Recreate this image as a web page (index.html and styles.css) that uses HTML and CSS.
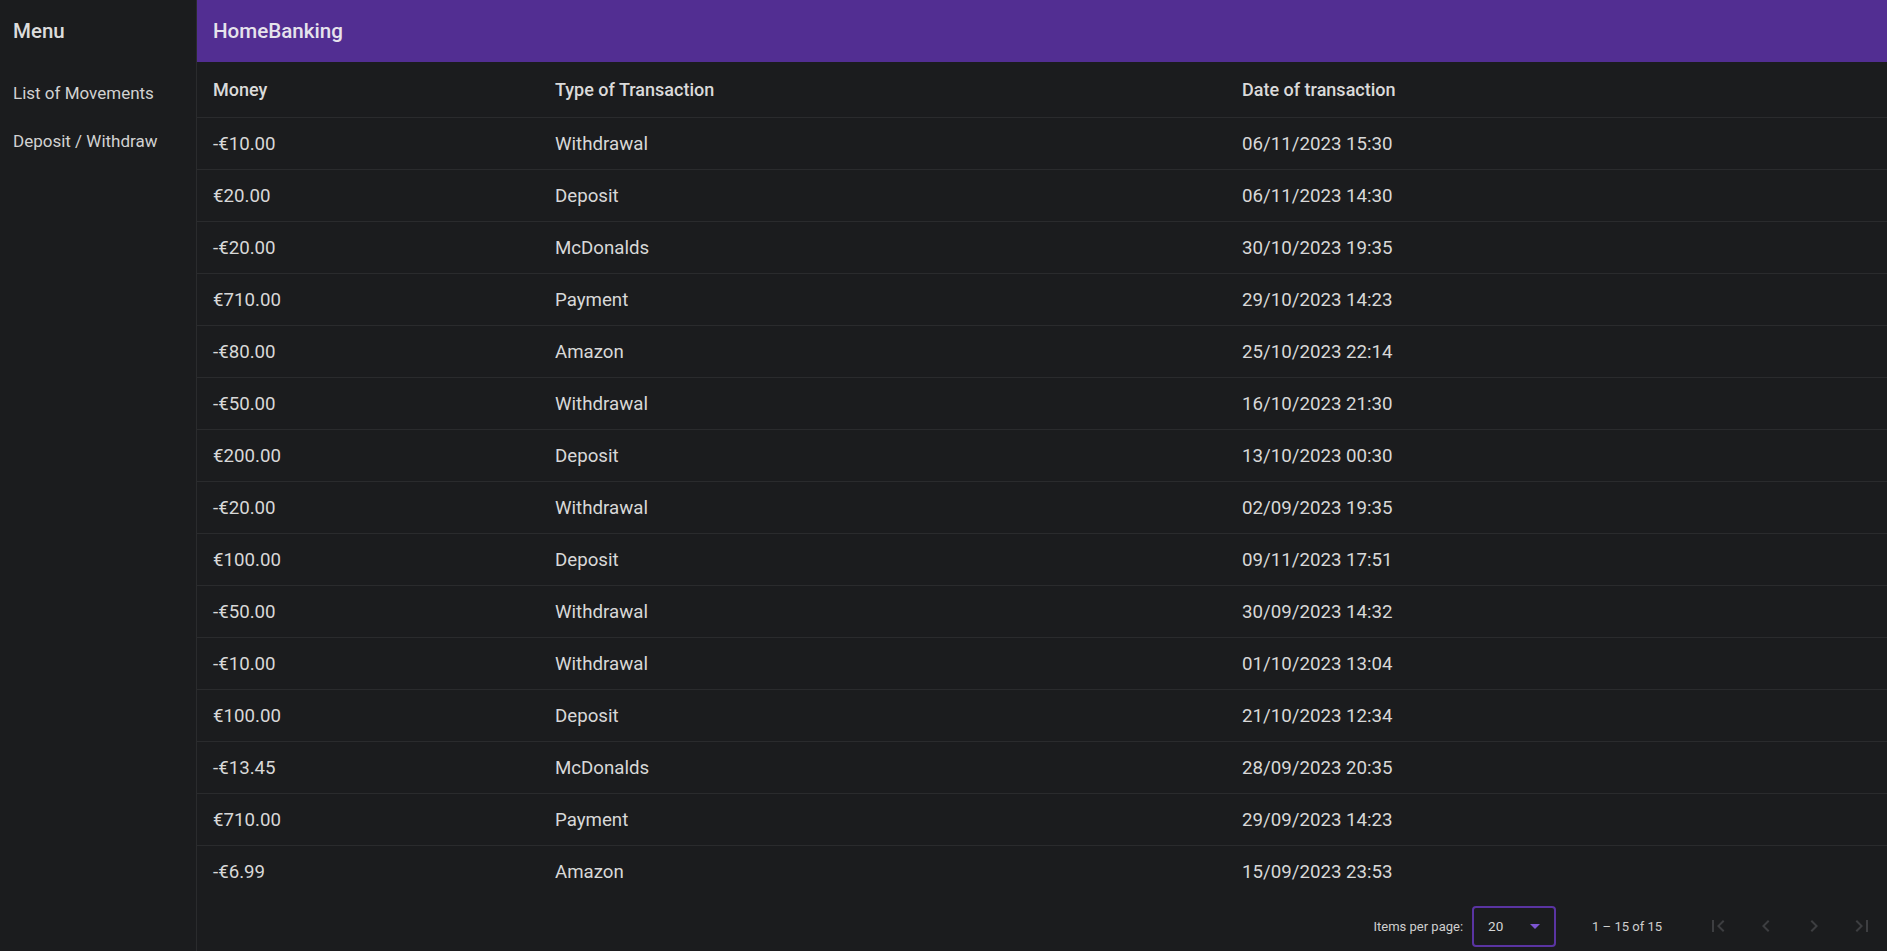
FILE: index.html
```html
<!DOCTYPE html>
<html lang="en">
<head>
<meta charset="utf-8">
<title>HomeBanking</title>
<link rel="stylesheet" href="styles.css">
</head>
<body>
<div class="app">
  <aside class="sidenav">
    <div class="side-title">Menu</div>
    <nav class="nav-list">
      <a class="nav-item" href="#">List of Movements</a>
      <a class="nav-item" href="#">Deposit / Withdraw</a>
    </nav>
  </aside>
  <main class="content">
    <header class="toolbar">HomeBanking</header>
    <table class="mov-table">
      <thead>
        <tr><th class="c-money">Money</th><th class="c-type">Type of Transaction</th><th>Date of transaction</th></tr>
      </thead>
      <tbody>
        <tr><td>-€10.00</td><td>Withdrawal</td><td>06/11/2023 15:30</td></tr>
        <tr><td>€20.00</td><td>Deposit</td><td>06/11/2023 14:30</td></tr>
        <tr><td>-€20.00</td><td>McDonalds</td><td>30/10/2023 19:35</td></tr>
        <tr><td>€710.00</td><td>Payment</td><td>29/10/2023 14:23</td></tr>
        <tr><td>-€80.00</td><td>Amazon</td><td>25/10/2023 22:14</td></tr>
        <tr><td>-€50.00</td><td>Withdrawal</td><td>16/10/2023 21:30</td></tr>
        <tr><td>€200.00</td><td>Deposit</td><td>13/10/2023 00:30</td></tr>
        <tr><td>-€20.00</td><td>Withdrawal</td><td>02/09/2023 19:35</td></tr>
        <tr><td>€100.00</td><td>Deposit</td><td>09/11/2023 17:51</td></tr>
        <tr><td>-€50.00</td><td>Withdrawal</td><td>30/09/2023 14:32</td></tr>
        <tr><td>-€10.00</td><td>Withdrawal</td><td>01/10/2023 13:04</td></tr>
        <tr><td>€100.00</td><td>Deposit</td><td>21/10/2023 12:34</td></tr>
        <tr><td>-€13.45</td><td>McDonalds</td><td>28/09/2023 20:35</td></tr>
        <tr><td>€710.00</td><td>Payment</td><td>29/09/2023 14:23</td></tr>
        <tr class="last"><td>-€6.99</td><td>Amazon</td><td>15/09/2023 23:53</td></tr>
      </tbody>
    </table>
    <div class="paginator">
      <span class="pg-label">Items per page:</span>
      <div class="pg-select"><span>20</span><span class="pg-arrow"></span></div>
      <span class="pg-range">1 – 15 of 15</span>
      <button class="pg-btn" aria-label="First page"><svg viewBox="0 0 24 24"><path d="M18.41 16.59L13.82 12l4.59-4.59L17 6l-6 6 6 6zM6 6h2v12H6z"/></svg></button>
      <button class="pg-btn" aria-label="Previous page"><svg viewBox="0 0 24 24"><path d="M15.41 7.41L14 6l-6 6 6 6 1.41-1.41L10.83 12z"/></svg></button>
      <button class="pg-btn" aria-label="Next page"><svg viewBox="0 0 24 24"><path d="M10 6L8.59 7.41 13.17 12l-4.58 4.59L10 18l6-6z"/></svg></button>
      <button class="pg-btn" aria-label="Last page"><svg viewBox="0 0 24 24"><path d="M5.59 7.41L10.18 12l-4.59 4.59L7 18l6-6-6-6zM16 6h2v12h-2z"/></svg></button>
    </div>
  </main>
</div>
</body>
</html>
```

FILE: styles.css
```css
html, body {
  margin: 0;
  padding: 0;
  height: 100%;
  overflow: hidden;
  background: #1b1c1e;
  font-family: Roboto, "Liberation Sans", sans-serif;
  color: #d9d9d9;
}

.app {
  display: flex;
  min-height: 100%;
}

.sidenav {
  width: 196px;
  flex: 0 0 196px;
  border-right: 1px solid #2a2b2d;
  background: #1b1c1e;
}

.side-title {
  height: 62px;
  display: flex;
  align-items: center;
  padding-left: 13px;
  font-size: 20.5px;
  font-weight: 500;
  color: #dcdcdc;
}

.nav-list {
  display: flex;
  flex-direction: column;
  padding-top: 7px;
}

.nav-item {
  height: 48px;
  display: flex;
  align-items: center;
  padding-left: 13px;
  font-size: 17px;
  color: #d2d2d2;
  text-decoration: none;
}

.content {
  flex: 1;
  display: flex;
  flex-direction: column;
  min-width: 0;
}

.toolbar {
  height: 62px;
  display: flex;
  align-items: center;
  padding-left: 16px;
  background: #522e92;
  font-size: 20.6px;
  font-weight: 500;
  color: #e6e3ec;
}

.mov-table {
  width: 100%;
  border-collapse: collapse;
  table-layout: fixed;
}

.mov-table th,
.mov-table td {
  text-align: left;
  padding: 0 0 0 16px;
  border-bottom: 1px solid #2a2b2d;
  color: #d8d8d8;
}

.mov-table th {
  height: 55px;
  font-size: 18px;
  font-weight: 500;
  color: #dadada;
}

.mov-table td {
  height: 51px;
  font-size: 18.7px;
  font-weight: 400;
}

.mov-table tr.last td {
  border-bottom: none;
  height: 52px;
}

.mov-table .c-money { width: 326px; }
.mov-table .c-type { width: 671px; }

.paginator {
  height: 56px;
  display: flex;
  align-items: center;
  justify-content: flex-end;
  padding-right: 1px;
  font-size: 13px;
  color: #cfcfcf;
}

.pg-label {
  margin-right: 9px;
}

.pg-select {
  box-sizing: border-box;
  width: 84px;
  height: 41px;
  border: 2px solid #5a34a2;
  border-radius: 4px;
  display: flex;
  align-items: center;
  justify-content: space-between;
  padding: 0 14px 0 14px;
  font-size: 13.5px;
  color: #d6d6d6;
}

.pg-arrow {
  width: 0;
  height: 0;
  border-left: 5px solid transparent;
  border-right: 5px solid transparent;
  border-top: 5px solid #7d55d2;
}

.pg-range {
  margin-left: 36px;
  margin-right: 32px;
}

.pg-btn {
  width: 48px;
  height: 48px;
  padding: 0;
  border: none;
  background: transparent;
  display: flex;
  align-items: center;
  justify-content: center;
}

.pg-btn svg {
  width: 24px;
  height: 24px;
  fill: #3d3e41;
}
```
